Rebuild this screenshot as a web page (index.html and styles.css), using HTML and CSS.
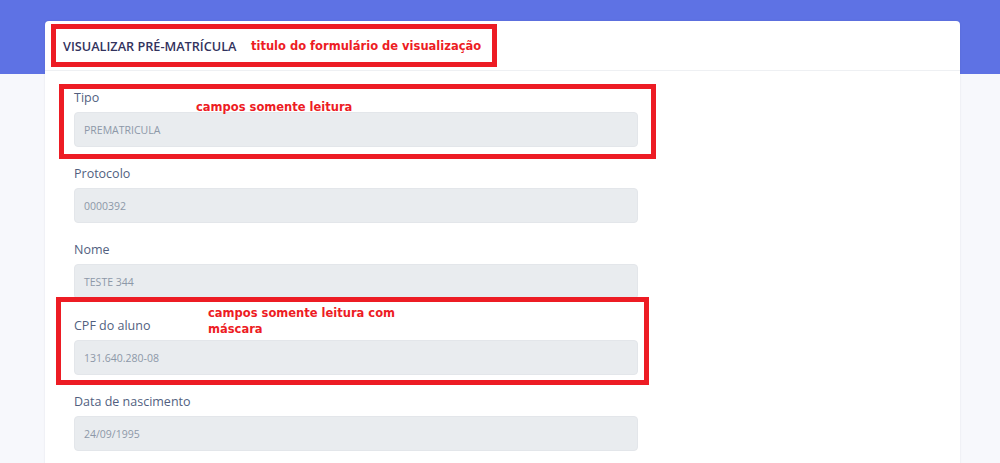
FILE: index.html
```html
<!DOCTYPE html>
<html lang="pt-BR">
<head>
<meta charset="utf-8">
<title>Visualizar Pré-Matrícula</title>
<link rel="stylesheet" href="styles.css">
</head>
<body>
<div class="page">
  <div class="topbar"></div>
  <div class="container">
    <div class="card">
      <div class="card-header">
        <h3 class="card-title">VISUALIZAR PRÉ-MATRÍCULA</h3>
      </div>
      <div class="card-body">
        <div class="form-group">
          <label class="form-label">Tipo</label>
          <div class="form-control">PREMATRICULA</div>
        </div>
        <div class="form-group">
          <label class="form-label">Protocolo</label>
          <div class="form-control">0000392</div>
        </div>
        <div class="form-group">
          <label class="form-label">Nome</label>
          <div class="form-control">TESTE 344</div>
        </div>
        <div class="form-group">
          <label class="form-label">CPF do aluno</label>
          <div class="form-control">131.640.280-08</div>
        </div>
        <div class="form-group">
          <label class="form-label">Data de nascimento</label>
          <div class="form-control">24/09/1995</div>
        </div>
      </div>
    </div>
  </div>

  <div class="mark mark-title"></div>
  <div class="mark mark-readonly"></div>
  <div class="mark mark-mask"></div>
  <div class="note note-title">titulo do formulário de visualização</div>
  <div class="note note-readonly">campos somente leitura</div>
  <div class="note note-mask">campos somente leitura com<br>máscara</div>
</div>
</body>
</html>
```

FILE: styles.css
```css
* { box-sizing: border-box; }

html, body {
  margin: 0;
  padding: 0;
  height: 100%;
  overflow: hidden;
}

body {
  background: #f7f8fc;
  font-family: "Open Sans", "Noto Sans", sans-serif;
}

.page {
  position: relative;
  height: 463px;
  overflow: hidden;
}

.topbar {
  height: 74px;
  background: #5e72e4;
}

.container {
  padding: 0 40px 0 45px;
  margin-top: -53px;
}

.card {
  width: 915px;
  background: #ffffff;
  border-radius: 4px 4px 0 0;
  box-shadow: 0 0 2px rgba(50, 50, 93, 0.12);
}

.card-header {
  height: 50px;
  padding: 0 18px;
  display: flex;
  align-items: center;
  border-bottom: 1px solid #eef0f3;
}

.card-title {
  margin: 0;
  font-size: 12.7px;
  font-weight: 600;
  color: #32325d;
}

.card-body {
  padding: 18px 29px 20px;
}

.form-group {
  margin-bottom: 18px;
}

.form-label {
  display: block;
  font-size: 12.5px;
  line-height: 17px;
  color: #525f7f;
  margin-bottom: 6px;
}

.form-control {
  width: 564px;
  height: 35px;
  background: #e9ecef;
  border: 1px solid #e3e6ea;
  border-radius: 4px;
  padding: 0 9px;
  display: flex;
  align-items: center;
  font-size: 10.5px;
  color: #8d98a8;
}

/* annotation overlays */
.mark {
  position: absolute;
  border: 5px solid #ed1c24;
}

.mark-title { left: 51px; top: 24px; width: 446px; height: 43px; }
.mark-readonly { left: 59px; top: 84px; width: 597px; height: 75px; }
.mark-mask { left: 56px; top: 297px; width: 593px; height: 88px; }

.note {
  position: absolute;
  color: #ed1c24;
  font-family: "DejaVu Sans", "Verdana", sans-serif;
  font-weight: bold;
  font-size: 11.5px;
  line-height: 16px;
  white-space: nowrap;
}

.note-title { left: 251px; top: 38px; }
.note-readonly { left: 196px; top: 99px; }
.note-mask { left: 208px; top: 305px; }
```
